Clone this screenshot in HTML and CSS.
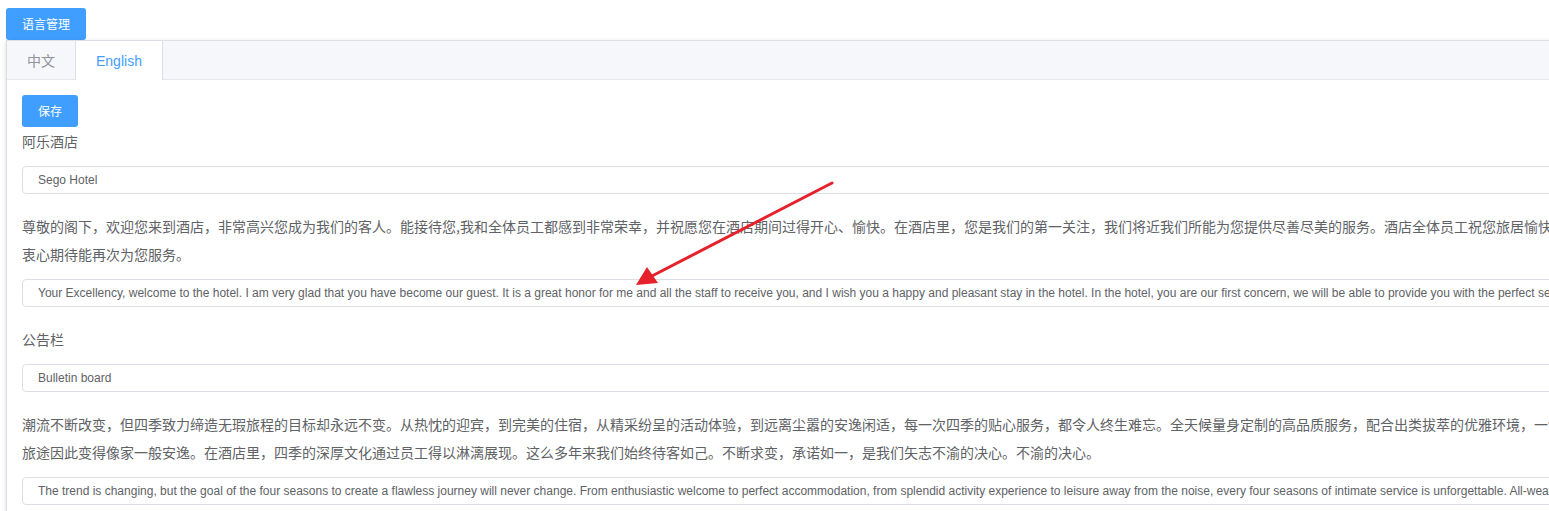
FILE: index.html
```html
<!DOCTYPE html>
<html lang="zh-CN">
<head>
<meta charset="utf-8">
<title>语言管理</title>
<link rel="stylesheet" href="styles.css">
</head>
<body>
<div class="page">
  <div class="toolbar"><button class="btn btn-top">语言管理</button></div>
  <div class="tabs">
    <div class="tabs-header">
      <div class="tab">中文</div>
      <div class="tab active">English</div>
    </div>
    <div class="tabs-content">
      <button class="btn btn-save">保存</button>
      <div class="item first">
        <div class="label">阿乐酒店</div>
        <input class="input" type="text" value="Sego Hotel">
      </div>
      <div class="item">
        <div class="label">
          <div class="line">尊敬的阁下，欢迎您来到酒店，非常高兴您成为我们的客人。能接待您,我和全体员工都感到非常荣幸，并祝愿您在酒店期间过得开心、愉快。在酒店里，您是我们的第一关注，我们将近我们所能为您提供尽善尽美的服务。酒店全体员工祝您旅居愉快，</div>
          <div class="line">衷心期待能再次为您服务。</div>
        </div>
        <input class="input" type="text" value="Your Excellency, welcome to the hotel. I am very glad that you have become our guest. It is a great honor for me and all the staff to receive you, and I wish you a happy and pleasant stay in the hotel. In the hotel, you are our first concern, we will be able to provide you with the perfect service.">
      </div>
      <div class="item">
        <div class="label">公告栏</div>
        <input class="input" type="text" value="Bulletin board">
      </div>
      <div class="item">
        <div class="label">
          <div class="line">潮流不断改变，但四季致力缔造无瑕旅程的目标却永远不变。从热忱的迎宾，到完美的住宿，从精采纷呈的活动体验，到远离尘嚣的安逸闲适，每一次四季的贴心服务，都令人终生难忘。全天候量身定制的高品质服务，配合出类拔萃的优雅环境，一切让您的</div>
          <div class="line">旅途因此变得像家一般安逸。在酒店里，四季的深厚文化通过员工得以淋漓展现。这么多年来我们始终待客如己。不断求变，承诺如一，是我们矢志不渝的决心。不渝的决心。</div>
        </div>
        <input class="input" type="text" value="The trend is changing, but the goal of the four seasons to create a flawless journey will never change. From enthusiastic welcome to perfect accommodation, from splendid activity experience to leisure away from the noise, every four seasons of intimate service is unforgettable. All-weather">
      </div>
    </div>
  </div>
</div>
<svg class="arrow" width="1549" height="511" viewBox="0 0 1549 511">
  <line x1="832" y1="183" x2="652" y2="276" stroke="#e5212b" stroke-width="3" stroke-linecap="round"/>
  <polygon points="636,285 647,267 658,283" fill="#e5212b"/>
</svg>
</body>
</html>
```

FILE: styles.css
```css
html, body {
  margin: 0;
  padding: 0;
  overflow: hidden;
  background: #fff;
}
body {
  font-family: "Liberation Sans", Arial, "Noto Sans CJK SC", sans-serif;
  color: #606266;
  width: 1549px;
  height: 511px;
  position: relative;
}
.page {
  width: 1620px;
  padding: 8px 0 0 6px;
}
.btn {
  border: none;
  background: #409eff;
  color: #fff;
  font-family: "Noto Sans CJK SC", "Liberation Sans", sans-serif;
  font-size: 12px;
  border-radius: 3px;
  height: 32px;
  padding: 0 0 2px;
  display: block;
}
.btn-top { width: 80px; }
.btn-save { width: 56px; }
.tabs {
  border: 1px solid #dcdfe6;
  background: #fff;
  box-shadow: 0 2px 4px 0 rgba(0,0,0,.12), 0 0 6px 0 rgba(0,0,0,.04);
  height: 480px;
}
.tabs-header {
  display: flex;
  height: 38px;
  background: #f5f7fa;
  border-bottom: 1px solid #e4e7ed;
}
.tab {
  font-family: "Noto Sans CJK SC", "Liberation Sans", sans-serif;
  font-size: 14px;
  color: #909399;
  line-height: 38px;
  padding: 0 20px;
  border-left: 1px solid transparent;
  border-right: 1px solid transparent;
  margin-left: -1px;
}
.tab:first-child { margin-left: 0; border-left: none; }
.tab.active {
  font-family: "Liberation Sans", Arial, sans-serif;
  line-height: 40px;
  background: #fff;
  color: #409eff;
  border-left-color: #dcdfe6;
  border-right-color: #dcdfe6;
  height: 39px;
}
.tabs-content {
  padding: 15px;
}
.item { margin-top: 18px; }
.item.first { margin-top: 0; }
.label {
  font-family: "Noto Sans CJK SC", sans-serif;
  font-size: 14px;
  line-height: 28px;
  color: #606266;
  margin-bottom: 11px;
}
.line { white-space: nowrap; }
.input {
  display: block;
  box-sizing: border-box;
  width: 1590px;
  height: 28px;
  border: 1px solid #dcdfe6;
  border-radius: 4px;
  padding: 0 15px;
  font-family: "Liberation Sans", Arial, sans-serif;
  font-size: 12px;
  color: #606266;
  background: #fff;
  outline: none;
}
.arrow {
  position: absolute;
  left: 0;
  top: 0;
  pointer-events: none;
}
```
